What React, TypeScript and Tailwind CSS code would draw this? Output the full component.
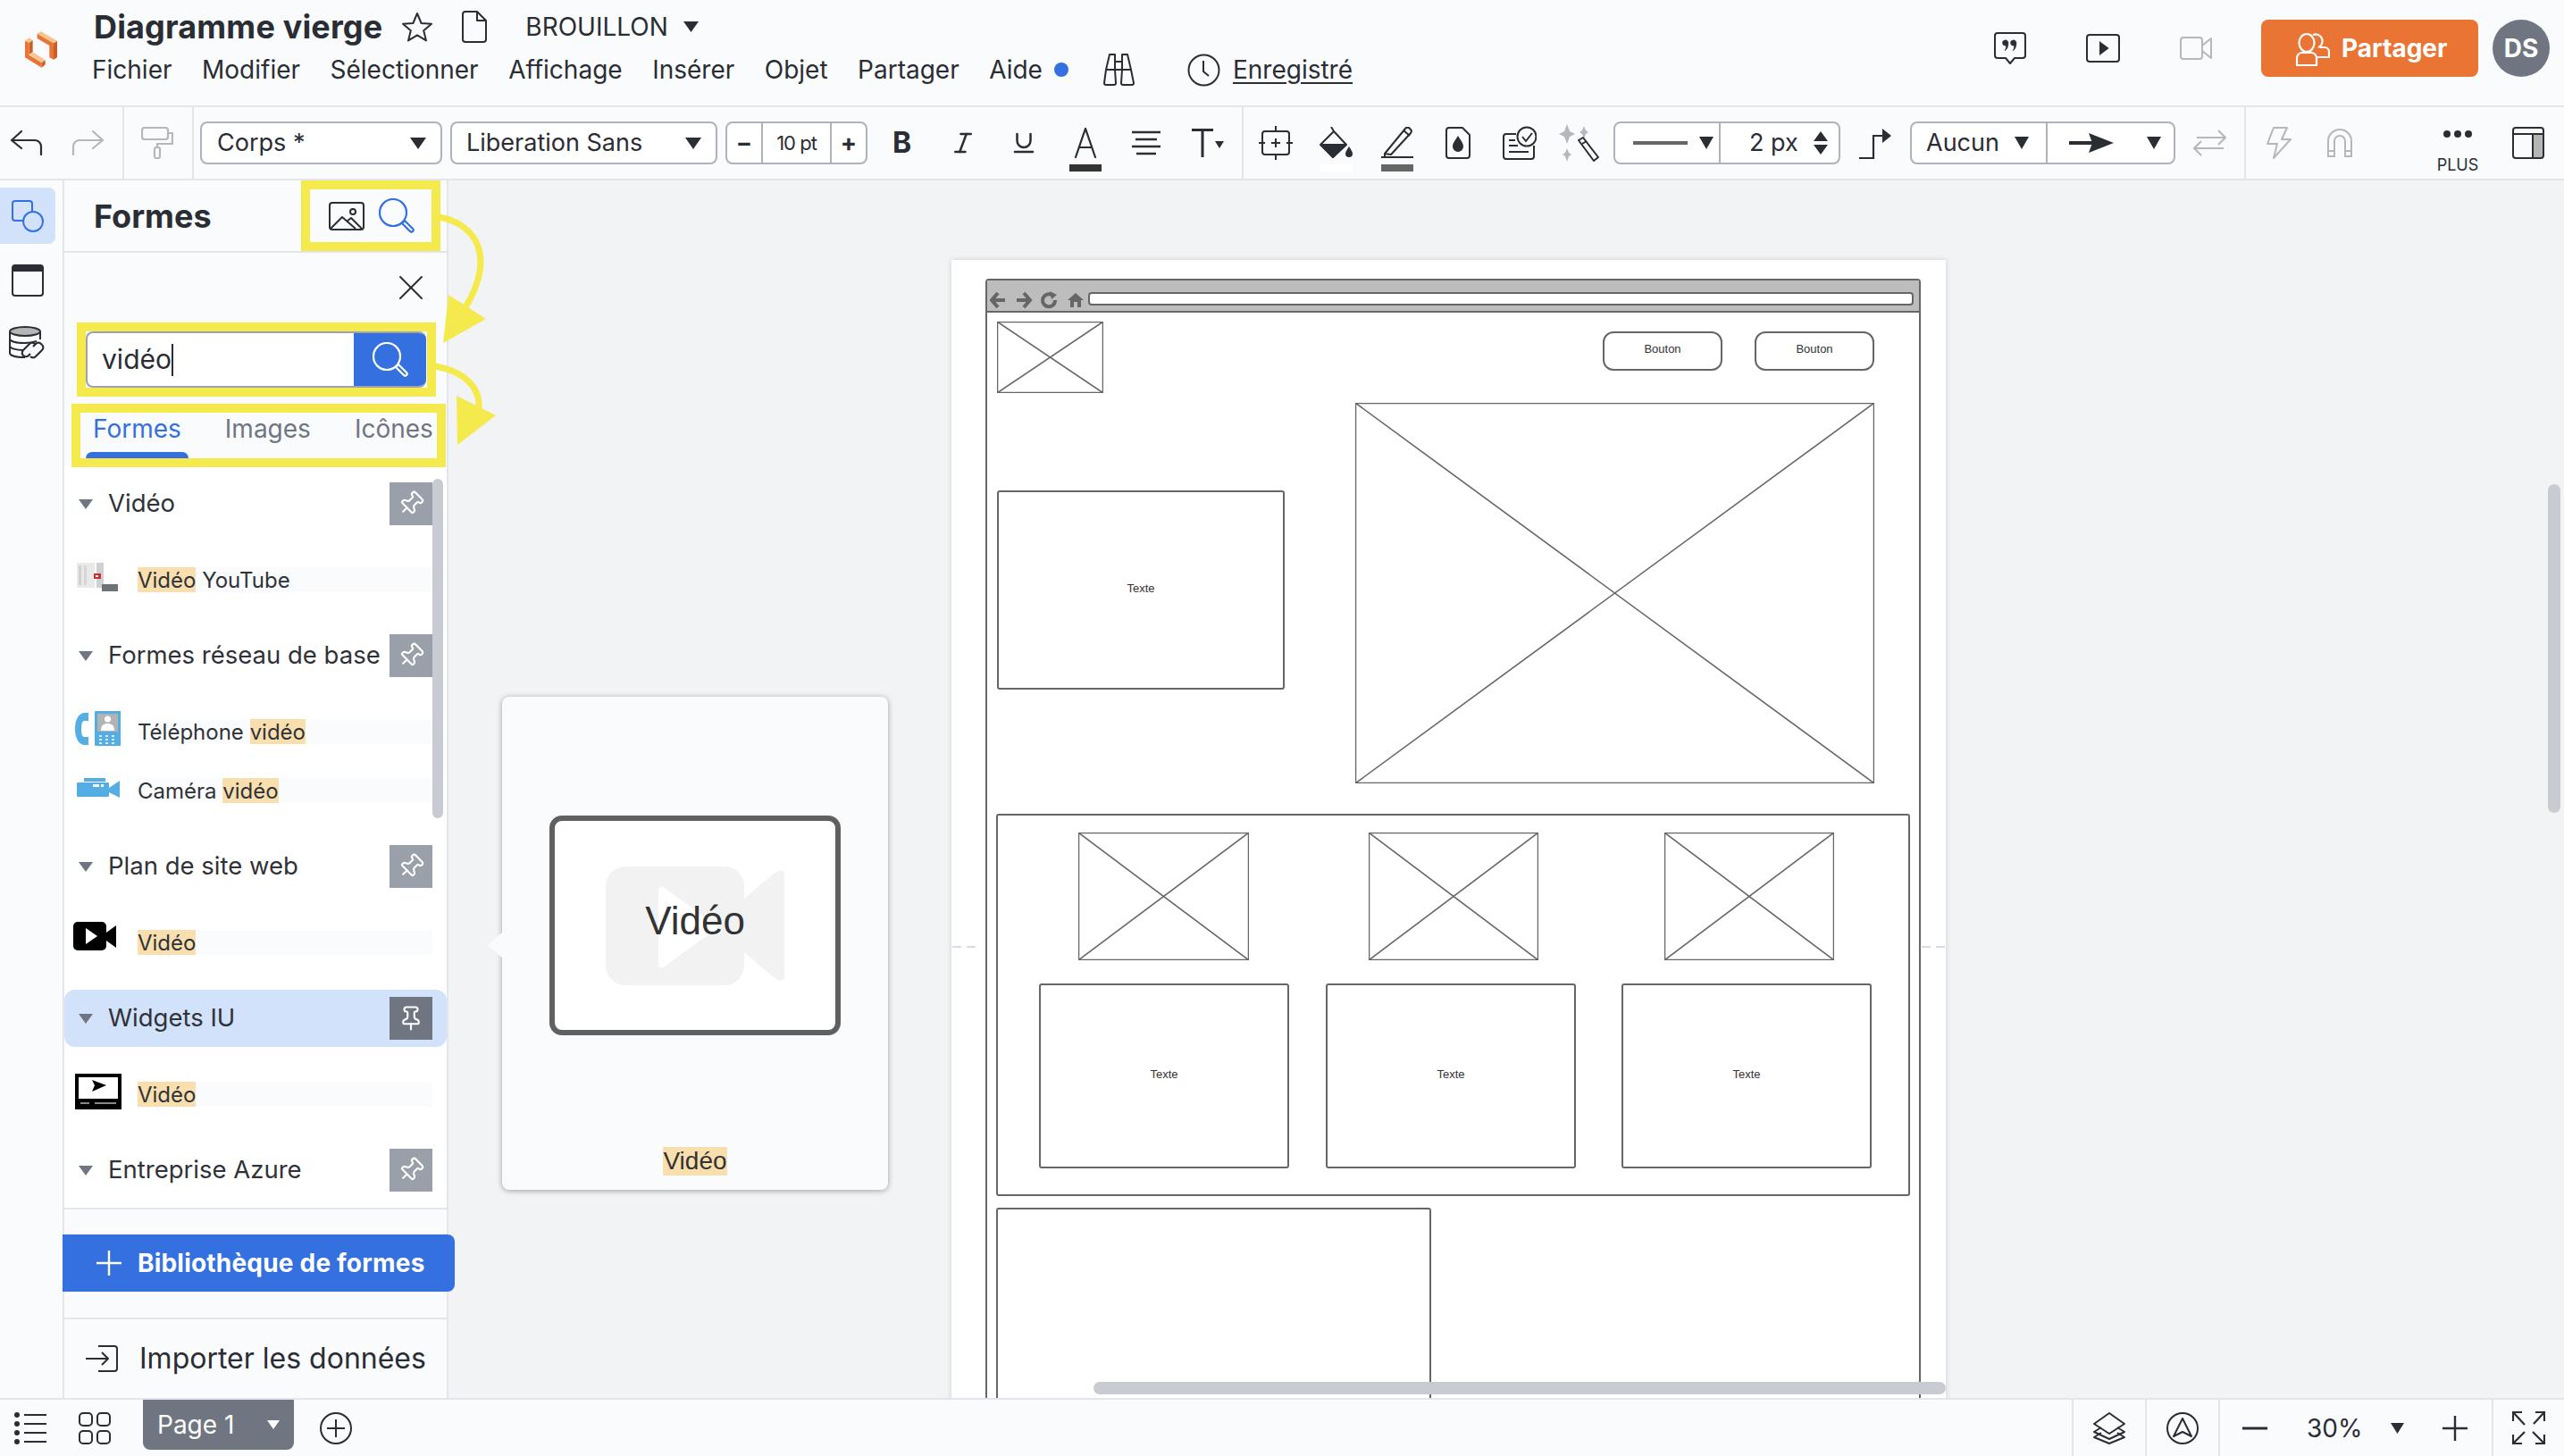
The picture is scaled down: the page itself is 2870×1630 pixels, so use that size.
import React from "react";
import { Italic, Underline, Pin, X } from "lucide-react";

const INK = "#2a2d34";
const GRAY = "#b4b7bc";

function Caret({ w = 18, h = 13, color = INK, up = false, className = "" }: { w?: number; h?: number; color?: string; up?: boolean; className?: string }) {
  return (
    <svg width={w} height={h} viewBox="0 0 18 13" preserveAspectRatio="none" className={className}>
      <polygon points={up ? "9,0 18,13 0,13" : "0,0 18,0 9,13"} fill={color} />
    </svg>
  );
}

function Logo() {
  return (
    <svg width="55" height="55" viewBox="0 0 165 165" className="shrink-0">
      <polygon points="65,38 120,70 120,125 106,118 106,78 65,54" fill="#e97434" />
      <polygon points="120,70 132,62 132,118 120,125" fill="#c9602a" />
      <polygon points="65,38 77,30 132,62 120,70" fill="#f7c48e" />
      <polygon points="38,68 50,60 50,100 38,108" fill="#c9602a" />
      <polygon points="24,62 38,68 38,110 80,135 80,152 24,118" fill="#e97434" />
      <polygon points="80,135 92,127 92,142 80,152" fill="#c9602a" />
      <polygon points="38,108 50,100 92,127 80,135" fill="#f7c48e" />
      <polygon points="24,62 38,52 50,60 38,68" fill="#f7c48e" />
    </svg>
  );
}

function Star() {
  return (
    <svg width="36" height="34" viewBox="0 0 36 34" fill="none" stroke={INK} strokeWidth="2" strokeLinejoin="round">
      <polygon points="18,2 22.6,13 34,13.8 25.2,21.2 28,32.4 18,26.4 8,32.4 10.8,21.2 2,13.8 13.4,13" />
    </svg>
  );
}
function Doc() {
  return (
    <svg width="28" height="36" viewBox="0 0 28 36" fill="none" stroke={INK} strokeWidth="2" strokeLinejoin="round">
      <path d="M4 1h13l10 10v21a3 3 0 0 1-3 3H4a3 3 0 0 1-3-3V4a3 3 0 0 1 3-3z" />
      <path d="M17 1v10h10" />
    </svg>
  );
}
function Binoculars() {
  return (
    <svg width="36" height="36" viewBox="0 0 36 36" fill="none" stroke={INK} strokeWidth="2" strokeLinejoin="round">
      <path d="M8 1h6v17h-10z M22 1h6l4 17H22z" />
      <path d="M14 9h8M14 18h8" />
      <path d="M4 18L2 33a2 2 0 0 0 2 2h9a2 2 0 0 0 2-2l-1-15M22 18l-1 15a2 2 0 0 0 2 2h10a2 2 0 0 0 2-2l-3-15" />
    </svg>
  );
}
function Clock() {
  return (
    <svg width="37" height="37" viewBox="0 0 37 37" fill="none" stroke={INK} strokeWidth="2">
      <circle cx="18.5" cy="18.5" r="17" />
      <path d="M18 8v12l6 5" />
    </svg>
  );
}
function Comment() {
  return (
    <svg width="36" height="36" viewBox="0 0 36 36" fill="none" stroke={INK} strokeWidth="2" strokeLinejoin="round">
      <path d="M4 1h28a3 3 0 0 1 3 3v22a3 3 0 0 1-3 3h-9l-5 6-5-6H4a3 3 0 0 1-3-3V4a3 3 0 0 1 3-3z" />
      <path d="M12 9a3 3 0 0 1 4 3c0 4-1 7-4 9 1-2 2-4 1-6a3 3 0 0 1-1-6zM21 9a3 3 0 0 1 4 3c0 4-1 7-4 9 1-2 2-4 1-6a3 3 0 0 1-1-6z" fill={INK} strokeWidth="0.5" />
    </svg>
  );
}
function PlayBox() {
  return (
    <svg width="38" height="32" viewBox="0 0 38 32" fill="none" stroke={INK} strokeWidth="2">
      <rect x="1" y="1" width="36" height="30" rx="3" />
      <polygon points="16,10 24,16 16,22" fill={INK} />
    </svg>
  );
}
function VideoCam() {
  return (
    <svg width="36" height="26" viewBox="0 0 36 26" fill="none" stroke={GRAY} strokeWidth="2" strokeLinejoin="round">
      <rect x="1" y="1" width="24" height="24" rx="3" />
      <path d="M25 10l10-8v22l-10-8" />
    </svg>
  );
}
function Users() {
  return (
    <svg width="40" height="40" viewBox="0 0 40 40" fill="none" stroke="#fff" strokeWidth="2.2" strokeLinejoin="round">
      <ellipse cx="14" cy="14" rx="8.5" ry="10" />
      <path d="M21 5a7 7 0 1 1 6 14" />
      <path d="M3 39v-8a6 6 0 0 1 6-6h10a6 6 0 0 1 6 6v8z" />
      <path d="M29 19h5a5 5 0 0 1 5 5v6H26" />
    </svg>
  );
}
function Undo({ color = INK, flip = false }: { color?: string; flip?: boolean }) {
  return (
    <svg width="37" height="28" viewBox="0 0 37 28" fill="none" stroke={color} strokeWidth="2.2" strokeLinecap="round" strokeLinejoin="round" className={flip ? "-scale-x-100" : ""}>
      <path d="M13 1L2 11l11 9" />
      <path d="M2 11h26a7 7 0 0 1 7 7v9" />
    </svg>
  );
}
function Roller() {
  return (
    <svg width="36" height="36" viewBox="0 0 36 36" fill="none" stroke={GRAY} strokeWidth="2.2" strokeLinejoin="round">
      <rect x="1" y="1" width="29" height="13" rx="3" />
      <path d="M30 7h5v12H18v4" />
      <rect x="15" y="23" width="6" height="12" rx="2" />
    </svg>
  );
}
function Select({ className, children }: { className: string; children: React.ReactNode }) {
  return (
    <div className={"flex h-[48px] shrink-0 items-center rounded-lg border-2 border-[#aeb2bc] bg-white text-[27px] " + className}>
      {children}
    </div>
  );
}
function AIcon() {
  return (
    <svg width="26" height="34" viewBox="0 0 26 34" fill="none" stroke={INK} strokeWidth="2.2" strokeLinecap="round">
      <path d="M2 33L13 1l11 32M6 22h14" />
    </svg>
  );
}
function AlignIcon() {
  return (
    <svg width="32" height="28" viewBox="0 0 32 28" stroke={INK} strokeWidth="2.4" fill="none">
      <path d="M0 2h32M4 10h24M0 18h32M5 26h22" />
    </svg>
  );
}
function TIcon() {
  return (
    <svg width="36" height="32" viewBox="0 0 36 32" fill={INK}>
      <path d="M0 0h24v3H13.5v29h-3V3H0z" />
      <polygon points="26,14 36,14 31,22" />
    </svg>
  );
}
function Crop() {
  return (
    <svg width="38" height="38" viewBox="0 0 38 38" fill="none" stroke={INK} strokeWidth="2">
      <rect x="4" y="6" width="30" height="26" rx="3" />
      <path d="M19 0v7M19 31v7M0 19h7M31 19h7M19 14v10M14 19h10" />
    </svg>
  );
}
function Fill() {
  return (
    <svg width="38" height="36" viewBox="0 0 38 36" fill="none" stroke={INK} strokeWidth="2" strokeLinejoin="round">
      <path d="M13 0l3 5M16 5L30 20 15 34 1 20z" />
      <path d="M2 20h27L15 34z" fill={INK} />
      <path d="M33 22c2 3 4 6 4 8a4 4 0 0 1-8 0c0-2 2-5 4-8z" fill={INK} stroke="none" />
    </svg>
  );
}
function Pen() {
  return (
    <svg width="36" height="36" viewBox="0 0 36 36" fill="none" stroke={INK} strokeWidth="2" strokeLinejoin="round">
      <path d="M4 30L27 2a3 3 0 0 1 5 0l1 1a3 3 0 0 1 0 4L11 31z" />
      <path d="M25 4l7 6M4 30v3M0 34h36" />
    </svg>
  );
}
function Drop() {
  return (
    <svg width="28" height="36" viewBox="0 0 28 36" fill="none" stroke={INK} strokeWidth="2" strokeLinejoin="round">
      <path d="M4 1h15l8 8v23a3 3 0 0 1-3 3H4a3 3 0 0 1-3-3V4a3 3 0 0 1 3-3z" />
      <path d="M14 10c3 5 6 8 6 12a6 6 0 0 1-12 0c0-4 3-7 6-12z" fill={INK} stroke="none" />
    </svg>
  );
}
function CheckDoc() {
  return (
    <svg width="38" height="38" viewBox="0 0 38 38" fill="none" stroke={INK} strokeWidth="2">
      <path d="M15 9H4a3 3 0 0 0-3 3v22a3 3 0 0 0 3 3h28a3 3 0 0 0 3-3V22" />
      <circle cx="27" cy="12" r="10.5" fill="#fafbfd" />
      <path d="M22 12l4 5 7-9M7 16h7M7 22h10M7 29h22" />
    </svg>
  );
}
function Magic() {
  return (
    <svg width="46" height="42" viewBox="0 0 46 42" fill="none">
      <path d="M9 0l3 8 6 3-6 3-3 8-3-8-6-3 6-3zM28 2l2 5 3 2-3 2-2 5-2-5-3-2 3-2zM9 27l2 5 3 2-3 2-2 6-2-6-3-2 3-2z" fill={GRAY} />
      <path d="M22 18l5-3 17 22-5 4z" stroke={INK} strokeWidth="2" strokeLinejoin="round" />
      <path d="M26 22l5-3" stroke={INK} strokeWidth="2" />
    </svg>
  );
}
function Elbow() {
  return (
    <svg width="36" height="36" viewBox="0 0 36 36" fill="none" stroke={INK} strokeWidth="2.2">
      <path d="M0 35h16V10h12" />
      <polygon points="26,2 36,10 26,18" fill={INK} stroke="none" />
    </svg>
  );
}
function ArrowSample() {
  return (
    <svg width="50" height="22" viewBox="0 0 50 22">
      <rect x="0" y="9" width="26" height="4" fill={INK} />
      <polygon points="22,0 50,11 22,22 26,11" fill={INK} />
    </svg>
  );
}
function Swap() {
  return (
    <svg width="37" height="30" viewBox="0 0 37 30" fill="none" stroke={GRAY} strokeWidth="2">
      <path d="M4 9h32M28 1l8 8-8 8" />
      <path d="M34 21H1M9 13l-8 8 8 8" />
    </svg>
  );
}
function Bolt() {
  return (
    <svg width="28" height="36" viewBox="0 0 28 36" fill="none" stroke={GRAY} strokeWidth="2" strokeLinejoin="round">
      <path d="M8 1h15l-6 13h10L8 35l4-16H1z" />
    </svg>
  );
}
function Magnet() {
  return (
    <svg width="28" height="32" viewBox="0 0 28 32" fill="none" stroke={GRAY} strokeWidth="2">
      <path d="M1 31V14a13 13 0 0 1 26 0v17h-7V14a6 6 0 0 0-12 0v17z" />
      <path d="M1 25h7M20 25h7" />
    </svg>
  );
}
function PanelIcon() {
  return (
    <svg width="36" height="36" viewBox="0 0 36 36" fill="none">
      <rect x="24" y="8" width="11" height="27" fill="#b5b5b5" />
      <rect x="1" y="1" width="34" height="34" rx="3" stroke={INK} strokeWidth="2" />
      <path d="M1 8h34M23 8v27" stroke={INK} strokeWidth="2" />
    </svg>
  );
}
function ShapesIcon() {
  return (
    <svg width="36" height="36" viewBox="0 0 36 36" fill="none" stroke="#3570e0" strokeWidth="2">
      <rect x="1" y="1" width="22" height="22" rx="3" />
      <circle cx="24" cy="24" r="11" fill="#d2e2fb" />
    </svg>
  );
}
function WindowIcon() {
  return (
    <svg width="36" height="36" viewBox="0 0 36 36" fill="none">
      <rect x="1" y="1" width="34" height="34" rx="3" stroke={INK} strokeWidth="2" />
      <rect x="1" y="1" width="34" height="7" fill={INK} />
    </svg>
  );
}
function DbIcon() {
  return (
    <svg width="42" height="40" viewBox="0 0 42 40" fill="none" stroke={INK} strokeWidth="2">
      <ellipse cx="18" cy="6" rx="17" ry="5" fill="#b5b5b5" />
      <path d="M1 6v24c0 3 7 5 17 5M35 6v9M1 14c0 3 7 5 17 5 5 0 10-1 13-2M1 22c0 3 7 5 15 5" />
      <path d="M24 31l-2 2a4 4 0 0 1-6-6l7-7a4 4 0 0 1 6 0M27 23l3-3a4 4 0 0 1 6 0l1 1a4 4 0 0 1 0 6l-7 7a4 4 0 0 1-6 0" strokeWidth="2.2" fill="#fafbfd" />
    </svg>
  );
}
function ImgIcon() {
  return (
    <svg width="40" height="32" viewBox="0 0 40 32" fill="none" stroke={INK} strokeWidth="2" strokeLinejoin="round">
      <rect x="1" y="1" width="38" height="30" rx="3" />
      <circle cx="27" cy="11" r="3" />
      <path d="M2 30l13-13 15 13M20 22l5-4 12 12" />
    </svg>
  );
}
function Search({ color, size }: { color: string; size: number }) {
  return (
    <svg width={size} height={size} viewBox="0 0 40 40" fill="none" stroke={color} strokeWidth="2.2">
      <circle cx="16" cy="16" r="15" />
      <path d="M26 28l3-3 9 9a2 2 0 0 1-3 3z" />
    </svg>
  );
}
function ImportIcon() {
  return (
    <svg width="36" height="30" viewBox="0 0 36 30" fill="none" stroke={INK} strokeWidth="2" strokeLinejoin="round">
      <path d="M14 1h18a3 3 0 0 1 3 3v22a3 3 0 0 1-3 3H14" />
      <path d="M0 15h25M18 8l7 7-7 7" />
    </svg>
  );
}
function ListIcon() {
  return (
    <svg width="36" height="36" viewBox="0 0 36 36" fill={INK} stroke={INK} strokeWidth="2">
      <circle cx="3" cy="3" r="2" /><circle cx="3" cy="13" r="2" /><circle cx="3" cy="23" r="2" /><circle cx="3" cy="33" r="2" />
      <path d="M11 3h25M11 13h25M11 23h25M11 33h25" />
    </svg>
  );
}
function GridIcon() {
  return (
    <svg width="36" height="36" viewBox="0 0 36 36" fill="none" stroke={INK} strokeWidth="2">
      <rect x="1" y="1" width="14" height="14" rx="4" /><rect x="21" y="1" width="14" height="14" rx="4" />
      <rect x="1" y="21" width="14" height="14" rx="4" /><rect x="21" y="21" width="14" height="14" rx="4" />
    </svg>
  );
}
function PlusCircle() {
  return (
    <svg width="36" height="36" viewBox="0 0 36 36" fill="none" stroke={INK} strokeWidth="2">
      <circle cx="18" cy="18" r="17" />
      <path d="M18 8v20M8 18h20" />
    </svg>
  );
}
function Layers() {
  return (
    <svg width="36" height="36" viewBox="0 0 36 36" fill="none" stroke={INK} strokeWidth="2" strokeLinejoin="round">
      <path d="M9 23l-8 5 17 7 17-7-8-5" />
      <path d="M9 17l-8 5 17 8 17-8-8-5" />
      <path d="M18 1L1 13l17 11 17-11z" />
    </svg>
  );
}
function NavIcon() {
  return (
    <svg width="36" height="36" viewBox="0 0 36 36" fill="none" stroke={INK} strokeWidth="2" strokeLinejoin="round">
      <circle cx="18" cy="18" r="17" />
      <path d="M18 7l10 20-10-5-10 5z" />
    </svg>
  );
}
function Expand() {
  return (
    <svg width="37" height="37" viewBox="0 0 37 37" fill="none" stroke={INK} strokeWidth="2.2">
      <path d="M1 11V1h10M1 1l13 14M26 1h10v10M36 1L24 14M1 26v10h10M1 36l13-13M36 26v10H26M36 36L23 23" />
    </svg>
  );
}
function YoutubeThumb() {
  return (
    <svg width="46" height="32" viewBox="0 0 46 32">
      <rect x="0" y="0" width="20" height="28" fill="#e9e9e9" />
      <rect x="22" y="0" width="8" height="28" fill="#cfd0d6" />
      <rect x="2" y="3" width="3" height="22" fill="#d0d0d0" />
      <rect x="8" y="3" width="3" height="22" fill="#d6d6d6" />
      <rect x="19" y="12" width="8" height="6" fill="#c9312b" />
      <rect x="21" y="14" width="3" height="2" fill="#fff" />
      <rect x="28" y="24" width="18" height="8" fill="#6d7278" />
    </svg>
  );
}
function PhoneThumb() {
  return (
    <svg width="52" height="40" viewBox="0 0 52 40">
      <path d="M16 2h-4C5 2 1 10 1 20s4 18 11 18h4v-9h-5c-2 0-3-4-3-9s1-9 3-9h5z" fill="#55aee3" />
      <rect x="23" y="0" width="29" height="39" rx="1" fill="#55aee3" />
      <rect x="26" y="3" width="23" height="20" fill="#b3b3b3" />
      <circle cx="37.5" cy="9" r="3.5" fill="#fff" />
      <path d="M30 22c0-6 3-8 7.500-8s7.500 2 7.500 8z" fill="#fff" />
      <path d="M28 28h20M28 32h20M28 36h20" stroke="#fff" strokeWidth="1.500" strokeDasharray="3 4" />
    </svg>
  );
}
function CamThumb() {
  return (
    <svg width="48" height="24" viewBox="0 0 48 24">
      <rect x="0" y="6" width="36" height="16" rx="1" fill="#55aee3" />
      <rect x="8" y="1" width="24" height="4" fill="#55aee3" />
      <polygon points="36,12 48,4 48,23 36,17" fill="#55aee3" />
      <rect x="18" y="8" width="7" height="3" fill="#fff" />
      <rect x="27" y="8" width="3" height="3" fill="#fff" />
    </svg>
  );
}
function BlackCam() {
  return (
    <svg width="48" height="32" viewBox="0 0 48 32">
      <rect x="0" y="0" width="37" height="32" rx="5" fill="#000" />
      <polygon points="37,12 48,4 48,29 37,21" fill="#000" />
      <polygon points="14,7 27,16 14,25" fill="#fff" />
    </svg>
  );
}
function ScreenThumb() {
  return (
    <svg width="52" height="40" viewBox="0 0 52 40">
      <rect x="0" y="0" width="52" height="40" fill="#000" />
      <rect x="4" y="4" width="44" height="24" fill="#fff" />
      <polygon points="19,7 35,13 19,20 22,13" fill="#000" />
      <path d="M6 33h10M22 33h24" stroke="#888" strokeWidth="2" />
    </svg>
  );
}
function XBox({ className }: { className: string }) {
  return (
    <svg className={"absolute box-border " + className} viewBox="0 0 100 100" preserveAspectRatio="none" fill="#fff" stroke="#666">
      <rect x="0" y="0" width="100" height="100" strokeWidth="2.500" vectorEffect="non-scaling-stroke" />
      <path d="M0 0L100 100M100 0L0 100" strokeWidth="1.600" vectorEffect="non-scaling-stroke" />
    </svg>
  );
}
function TextBox({ className, label = "Texte" }: { className: string; label?: string }) {
  return (
    <div className={"absolute box-border flex items-center justify-center border-2 border-[#666] bg-white pb-1 font-['Liberation_Sans',sans-serif] text-[13px] text-[#333] " + className}>
      {label}
    </div>
  );
}
function Mark({ children }: { children: React.ReactNode }) {
  return <span className="inline-block h-7 bg-[#f9dfae] leading-[30px]">{children}</span>;
}
function Row({ icon, children }: { icon: React.ReactNode; children: React.ReactNode }) {
  return (
    <div className="flex h-7 items-center">
      <div className="flex h-7 w-[82px] shrink-0 -translate-y-[3px] items-center pl-2.5">{icon}</div>
      <div className="mr-4 h-7 flex-1 bg-[#fafbfd] text-[24px] leading-[30px] text-[#2f3238]">{children}</div>
    </div>
  );
}
function SectionHead({ title, active = false }: { title: string; active?: boolean }) {
  return (
    <div className={"flex items-center pl-4 pr-4 " + (active ? "-my-2 h-16 rounded-xl bg-[#d2e2fb]" : "h-12")}>
      <Caret w={16} h={11} color="#6f7681" />
      <span className="ml-[17px] flex-1 text-[27.5px] text-[#2f3238]">{title}</span>
      <div className={"flex h-12 w-12 items-center justify-center " + (active ? "bg-[#6f7681]" : "bg-[#9aa0a9]")}>
        <Pin size={30} color="#fff" strokeWidth={1.7} className={active ? "" : "rotate-45"} />
      </div>
    </div>
  );
}
function Section({ title, active, rows }: { title: string; active?: boolean; rows: [React.ReactNode, React.ReactNode][] }) {
  return (
    <div>
      <SectionHead title={title} active={active} />
      <div className="flex flex-col gap-[38px] py-[47px]">
        {rows.map((r, i) => (
          <Row key={i} icon={r[0]}>{r[1]}</Row>
        ))}
      </div>
    </div>
  );
}

export default function App() {
  return (
    <div className="relative flex h-[1630px] w-[2870px] flex-col overflow-hidden bg-[#fafbfd] font-[Inter,sans-serif] text-[#2a2d34]">
      {/* Header */}
      <header className="flex h-[120px] shrink-0 items-start border-b-2 border-[#e3e5ec] pl-5 pr-4">
        <div className="mt-[25px]"><Logo /></div>
        <div className="ml-[30px] flex flex-col">
          <div className="mt-[10px] flex h-10 items-center">
            <span className="text-[36px] font-bold tracking-[0.15px]">Diagramme vierge</span>
            <span className="ml-[21px]"><Star /></span>
            <span className="ml-8"><Doc /></span>
            <span className="ml-[43px] text-[28px]">BROUILLON</span>
            <span className="ml-[17px]"><Caret w={17} h={12} /></span>
          </div>
          <div className="-ml-0.5 mt-2 flex h-10 items-center text-[28px]">
            <div className="flex gap-[33.5px]">
              {["Fichier", "Modifier", "Sélectionner", "Affichage", "Insérer", "Objet", "Partager", "Aide"].map((m) => (
                <span key={m}>{m}</span>
              ))}
            </div>
            <span className="ml-[13px] h-4 w-4 rounded-full bg-[#3570e0]" />
            <span className="ml-[38px]"><Binoculars /></span>
            <span className="ml-[59px]"><Clock /></span>
            <span className="ml-3.5 underline underline-offset-4">Enregistré</span>
          </div>
        </div>
        <div className="ml-auto mt-[22px] flex h-16 items-center">
          <Comment />
          <span className="ml-[67px]"><PlayBox /></span>
          <span className="ml-[67px]"><VideoCam /></span>
          <button className="ml-[55px] flex h-16 w-[243px] items-center rounded-lg bg-[#e97434] pl-[37px] text-[28px] font-bold text-white">
            <Users />
            <span className="ml-[13px]">Partager</span>
          </button>
          <div className="ml-4 flex h-16 w-16 items-center justify-center rounded-full bg-[#6f7681] text-[28px] font-bold text-white">DS</div>
        </div>
      </header>

      {/* Toolbar */}
      <div className="flex h-[82px] shrink-0 items-center border-b-2 border-[#e3e5ec] pl-[11px]">
        <Undo />
        <span className="ml-8"><Undo color={GRAY} flip /></span>
        <span className="ml-5 w-0.5 self-stretch bg-[#e3e5ec]" />
        <span className="ml-[19px]"><Roller /></span>
        <span className="ml-[21px] w-0.5 self-stretch bg-[#e3e5ec]" />
        <Select className="ml-[7px] w-[271px] justify-between pl-[17px] pr-4">
          <span>Corps *</span><Caret />
        </Select>
        <Select className="ml-[9px] w-[299px] justify-between pl-4 pr-4">
          <span>Liberation Sans</span><Caret />
        </Select>
        <Select className="ml-[9px] w-[159px] text-[23px]">
          <span className="flex h-full w-[40px] items-center justify-center border-r-2 border-[#aeb2bc] font-bold">−</span>
          <span className="flex h-full w-[77px] items-center justify-center border-r-2 border-[#aeb2bc] text-[22px] tracking-[-1px]">10 pt</span>
          <span className="flex h-full flex-1 items-center justify-center font-bold">+</span>
        </Select>
        <span className="ml-[28px] w-[22px] text-[32px] font-bold leading-none">B</span>
        <span className="ml-[42px]"><Italic size={30} strokeWidth={2} color={INK} /></span>
        <span className="ml-[38px]"><Underline size={30} strokeWidth={2} color={INK} /></span>
        <div className="relative ml-[36px] flex w-9 items-center justify-center self-stretch">
          <AIcon />
          <span className="absolute left-0 right-0 top-[64px] h-2 bg-[#333]" />
        </div>
        <span className="ml-[34px]"><AlignIcon /></span>
        <span className="ml-[35px]"><TIcon /></span>
        <span className="ml-5 w-0.5 self-stretch bg-[#e3e5ec]" />
        <span className="ml-[17px]"><Crop /></span>
        <div className="relative ml-[30px] flex w-[38px] items-center justify-center self-stretch">
          <Fill />
          <span className="absolute left-px right-px top-[64px] h-2 bg-white" />
        </div>
        <div className="relative ml-[31px] flex w-9 items-center justify-center self-stretch">
          <Pen />
          <span className="absolute left-0 right-0 top-[64px] h-2 bg-[#666]" />
        </div>
        <span className="ml-9"><Drop /></span>
        <span className="ml-9"><CheckDoc /></span>
        <span className="ml-[25px]"><Magic /></span>
        <Select className="ml-[15px] w-[254px]">
          <div className="flex h-full w-[118px] items-center border-r-2 border-[#aeb2bc] pl-5">
            <span className="h-1 w-[61px] bg-[#666]" />
            <Caret className="ml-[13px]" w={16} h={14} />
          </div>
          <span className="ml-[32px]">2 px</span>
          <div className="ml-auto mr-3 flex flex-col gap-1">
            <Caret up w={16} h={11} />
            <Caret w={16} h={11} />
          </div>
        </Select>
        <span className="ml-[21px]"><Elbow /></span>
        <Select className="ml-[21px] w-[297px]">
          <div className="flex h-full w-[152px] items-center border-r-2 border-[#aeb2bc] pl-4">
            <span>Aucun</span>
            <Caret className="ml-[17px]" w={16} h={14} />
          </div>
          <span className="ml-[24px]"><ArrowSample /></span>
          <Caret className="ml-[37px]" w={16} h={14} />
        </Select>
        <span className="ml-5"><Swap /></span>
        <span className="ml-5 w-0.5 self-stretch bg-[#e3e5ec]" />
        <span className="ml-[23px]"><Bolt /></span>
        <span className="ml-[40px]"><Magnet /></span>
        <div className="ml-[90px] mt-[21px] flex w-[56px] flex-col items-center">
          <div className="flex gap-1">
            <span className="h-2 w-2 rounded-full bg-[#2a2d34]" />
            <span className="h-2 w-2 rounded-full bg-[#2a2d34]" />
            <span className="h-2 w-2 rounded-full bg-[#2a2d34]" />
          </div>
          <span className="mt-[21px] text-[18px] leading-5">PLUS</span>
        </div>
        <span className="ml-[33px]"><PanelIcon /></span>
      </div>

      {/* Main */}
      <div className="flex min-h-0 flex-1">
        {/* Rail */}
        <div className="flex w-[70px] shrink-0 flex-col items-center">
          <div className="ml-[-8px] mt-2 flex h-[63px] w-[62px] items-center justify-center rounded-r-lg bg-[#d2e2fb]"><ShapesIcon /></div>
          <div className="ml-[-8px] mt-[23px]"><WindowIcon /></div>
          <div className="ml-[-8px] mt-[33px]"><DbIcon /></div>
        </div>

        {/* Sidebar */}
        <aside className="relative flex w-[432px] shrink-0 flex-col border-x-2 border-[#e3e5ec] bg-[#fafbfd]">
          <div className="flex h-[81px] shrink-0 items-start border-b-2 border-[#e3e5ec]">
            <span className="ml-[33px] mt-[20px] text-[36px] font-bold leading-10">Formes</span>
            <div className="ml-auto mr-[7px] flex h-[79px] w-[156px] items-center border-[10px] border-[#f5ea4d] pl-[21px]">
              <ImgIcon />
              <span className="ml-4"><Search color="#3570e0" size={40} /></span>
            </div>
          </div>
          <div className="flex h-[78px] shrink-0 items-center justify-end pr-4">
            <X size={48} strokeWidth={1} color={INK} />
          </div>
          <div className="ml-3.5 mr-3 h-[83px] shrink-0 border-[10px] border-[#f5ea4d]">
            <div className="mr-px flex h-[63px] overflow-hidden rounded-lg border-2 border-r-0 border-[#9ea2aa] bg-white">
              <div className="flex flex-1 items-center pl-4 text-[30px]">
                vidéo<span className="h-9 w-0.5 bg-[#2a2d34]" />
              </div>
              <div className="flex w-[81px] items-center justify-center bg-[#3570e0]"><Search color="#fff" size={40} /></div>
            </div>
          </div>
          <div className="relative z-10 ml-2 mr-px mt-2 h-[71px] shrink-0 border-[10px] border-[#f5ea4d]">
            <div className="flex h-full items-start text-[28px] leading-9 text-[#6f7681]">
              <span className="ml-[14px] text-[#3570e0]">Formes</span>
              <span className="ml-[49px]">Images</span>
              <span className="ml-[49px]">Icônes</span>
            </div>
            <span className="absolute bottom-0 left-[6px] h-[7px] w-[115px] rounded-t-lg bg-[#3570e0]" />
          </div>
          <div className="relative min-h-0 flex-1 overflow-hidden bg-white pt-[17px]">
            <Section title="Vidéo" rows={[[<span className="ml-[4px]"><YoutubeThumb /></span>, <><Mark>Vidéo</Mark> YouTube</>]]} />
            <Section
              title="Formes réseau de base"
              rows={[
                [<span className="ml-px"><PhoneThumb /></span>, <>Téléphone <Mark>vidéo</Mark></>],
                [<span className="ml-[4px]"><CamThumb /></span>, <>Caméra <Mark>vidéo</Mark></>],
              ]}
            />
            <Section title="Plan de site web" rows={[[<span className="-translate-y-1"><BlackCam /></span>, <Mark>Vidéo</Mark>]]} />
            <Section title="Widgets IU" active rows={[[<span className="ml-0.5"><ScreenThumb /></span>, <Mark>Vidéo</Mark>]]} />
            <SectionHead title="Entreprise Azure" />
            <span className="absolute left-[412px] top-[13px] h-[380px] w-3 rounded-md bg-[#c8ccd2]" />
          </div>
          <div className="relative flex h-[125px] shrink-0 items-start border-y-2 border-[#e3e5ec]">
            <button className="relative z-10 -ml-0.5 mt-[28px] flex h-16 w-[439px] shrink-0 items-center rounded-r-lg bg-[#3570e0] pl-[38px] text-[28px] font-bold tracking-[0.2px] text-white">
              <svg width="28" height="28" viewBox="0 0 28 28" stroke="#fff" strokeWidth="2.4"><path d="M14 0v28M0 14h28" /></svg>
              <span className="ml-[18px]">Bibliothèque de formes</span>
            </button>
          </div>
          <div className="flex h-[88px] shrink-0 items-center pl-6">
            <ImportIcon />
            <span className="ml-6 text-[32px]">Importer les données</span>
          </div>
        </aside>

        {/* Canvas */}
        <main className="relative min-w-0 flex-1 overflow-hidden bg-[#f2f3f5]">
          <div className="relative ml-[563px] mt-[89px] h-[1400px] w-[1113px] bg-white shadow-[0_0_6px_rgba(0,0,0,0.15)]">
            {/* Page guide marks */}
            <div className="absolute left-px top-[768px] flex gap-1.5">
              <span className="h-0.5 w-2.5 bg-[#d9dadc]" /><span className="h-0.5 w-2.5 bg-[#d9dadc]" />
            </div>
            <div className="absolute right-px top-[768px] flex gap-1.5">
              <span className="h-0.5 w-2.5 bg-[#d9dadc]" /><span className="h-0.5 w-2.5 bg-[#d9dadc]" />
            </div>
            {/* Browser wireframe */}
            <div className="absolute left-[38px] top-[21px] box-border h-[1500px] w-[1047px] rounded-t border-2 border-[#666]">
              <div className="relative h-[36px] border-b-2 border-[#666] bg-[#bdbdbd]">
                <svg className="absolute left-[3px] top-[12px]" width="108" height="20" viewBox="0 0 108 20" fill="#666" stroke="#666">
                  <path d="M9 2L2 10l7 8M2 10h15" fill="none" strokeWidth="4" />
                  <path d="M38 2l7 8-7 8M45 10H30" fill="none" strokeWidth="4" />
                  <path d="M69 4a7 7 0 1 0 4 6" fill="none" strokeWidth="4" />
                  <polygon points="67,0 75,4 69,9" stroke="none" />
                  <polygon points="96,2 105,10 102,10 102,18 98,18 98,12 94,12 94,18 90,18 90,10 87,10" stroke="none" />
                </svg>
                <div className="absolute left-[113px] top-[13px] h-[15px] w-[924px] rounded border-2 border-[#666] bg-white" />
              </div>
            </div>
            <XBox className="left-[51px] top-[69px] h-[80px] w-[119px]" />
            <TextBox className="left-[729px] top-[80px] h-[44px] w-[134px] rounded-xl" label="Bouton" />
            <TextBox className="left-[899px] top-[80px] h-[44px] w-[134px] rounded-xl" label="Bouton" />
            <XBox className="left-[452px] top-[160px] h-[426px] w-[581px]" />
            <TextBox className="left-[51px] top-[258px] h-[223px] w-[322px] rounded-[3px]" />
            <div className="absolute left-[50px] top-[620px] box-border h-[428px] w-[1023px] rounded-[3px] border-2 border-[#666]" />
            <XBox className="left-[142px] top-[641px] h-[143px] w-[191px]" />
            <XBox className="left-[467px] top-[641px] h-[143px] w-[190px]" />
            <XBox className="left-[798px] top-[641px] h-[143px] w-[190px]" />
            <TextBox className="left-[98px] top-[810px] h-[207px] w-[280px] rounded-[3px]" />
            <TextBox className="left-[419px] top-[810px] h-[207px] w-[280px] rounded-[3px]" />
            <TextBox className="left-[750px] top-[810px] h-[207px] w-[280px] rounded-[3px]" />
            <div className="absolute left-[50px] top-[1061px] box-border h-[400px] w-[487px] rounded-[3px] border-2 border-[#666] bg-white" />
          </div>

          {/* Shape preview */}
          <div className="absolute left-[60px] top-[578px] flex h-[552px] w-[432px] flex-col items-center rounded-lg bg-[#fafbfd] shadow-[0_1px_6px_rgba(0,0,0,0.35)]">
            <svg className="absolute left-[-16px] top-[263px]" width="17" height="30" viewBox="0 0 17 30"><polygon points="17,0 0,15 17,30" fill="#fafbfd" /></svg>
            <div className="relative mt-[133px] flex h-[246px] w-[326px] items-center justify-center rounded-[14px] border-[6px] border-[#606060] bg-white">
              <svg className="absolute left-[57px] top-[51px]" width="200" height="133" viewBox="0 0 200 133">
                <rect x="0" y="0" width="155" height="133" rx="22" fill="#f2f2f2" />
                <path d="M155 36L188 8q12-8 12 2v112q0 10-12 2L155 96z" fill="#f2f2f2" />
                <path d="M59 28q0-8 7-4l60 44-60 44q-7 4-7-4z" fill="#fff" />
              </svg>
              <span className="relative -mt-[10px] font-['Liberation_Sans',sans-serif] text-[44px] text-[#333]">Vidéo</span>
            </div>
            <span className="mt-[125px] bg-[#f9dfae] font-['Liberation_Sans',sans-serif] text-[28px] leading-8 text-[#333]">Vidéo</span>
          </div>

          {/* Scrollbars */}
          <span className="absolute bottom-1 left-[722px] h-3.5 w-[954px] rounded-lg bg-[#c8ccd2]" />
          <span className="absolute right-1 top-[340px] h-[368px] w-3.5 rounded-lg bg-[#c8ccd2]" />
        </main>
      </div>

      {/* Bottom bar */}
      <footer className="flex h-[65px] shrink-0 border-t-2 border-[#e3e5ec]">
        <div className="ml-4 self-center"><ListIcon /></div>
        <div className="ml-9 self-center"><GridIcon /></div>
        <div className="ml-9 flex h-14 w-[169px] items-center rounded-b-lg bg-[#6f7681] pl-4 text-[28px] text-white">
          Page 1
          <Caret className="ml-auto mr-[16px]" color="#fff" w={14} h={10} />
        </div>
        <div className="ml-[29px] self-center"><PlusCircle /></div>
        <div className="ml-auto flex">
          <div className="flex w-[82px] items-center justify-center border-l-2 border-[#e3e5ec]"><Layers /></div>
          <div className="flex w-[82px] items-center justify-center border-l-2 border-[#e3e5ec]"><NavIcon /></div>
          <div className="flex w-[306px] items-center border-l-2 border-[#e3e5ec]">
            <svg className="ml-[25px]" width="28" height="4" viewBox="0 0 28 4"><rect width="28" height="3" y="0.5" fill={INK} /></svg>
            <span className="ml-[44px] w-[60px] text-[28px]">30%</span>
            <Caret className="ml-[34px]" w={15} h={12} />
            <svg className="ml-[43px]" width="28" height="28" viewBox="0 0 28 28" stroke={INK} strokeWidth="2.4"><path d="M14 0v28M0 14h28" /></svg>
          </div>
          <div className="flex w-[81px] items-center justify-center border-l-2 border-[#e3e5ec]"><Expand /></div>
        </div>
      </footer>

      {/* Annotation arrows */}
      <svg className="pointer-events-none absolute left-0 top-0 z-20" width="2870" height="1630" viewBox="0 0 2870 1630" fill="none">
        <path d="M492 243C530 250 560 285 516 352" stroke="#f5ea4d" strokeWidth="7" />
        <polygon points="502,330 544,357 496,384" fill="#f5ea4d" />
        <path d="M487 410C515 415 538 430 536 458" stroke="#f5ea4d" strokeWidth="7" />
        <polygon points="511,443 555,465 512,498" fill="#f5ea4d" />
      </svg>
    </div>
  );
}
